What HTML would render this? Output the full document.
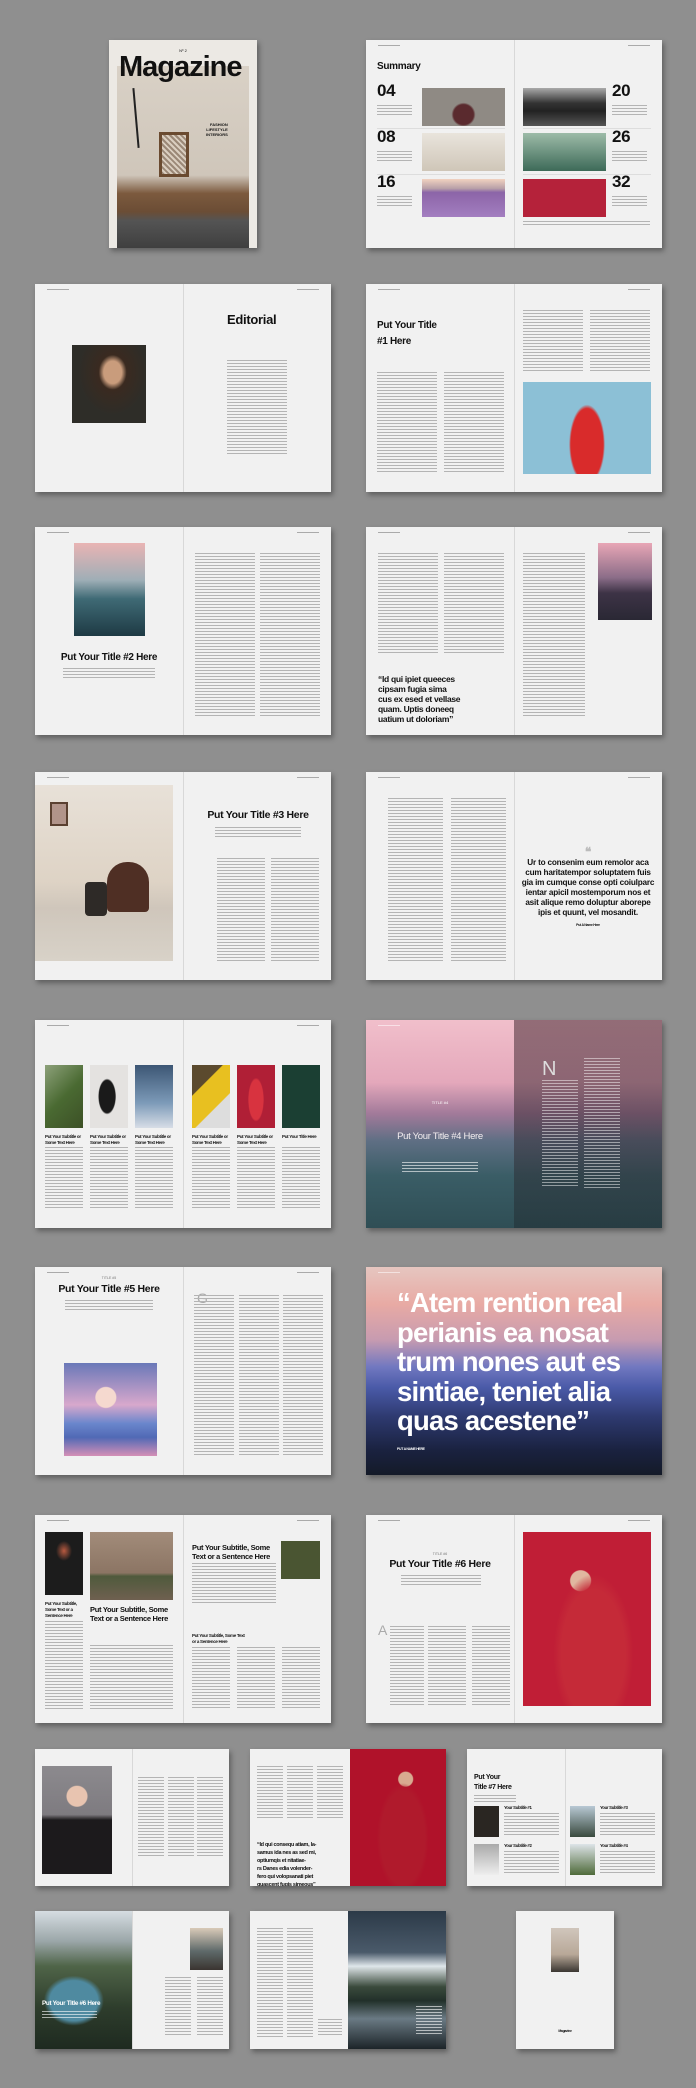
<!DOCTYPE html>
<html><head><meta charset="utf-8">
<style>
*{box-sizing:border-box}
body{margin:0;width:696px;height:2088px;background:#8f8f8f;position:relative;overflow:hidden;font-family:"Liberation Sans",sans-serif;color:#111}
.p{position:absolute;background:#f1f1f1;box-shadow:2px 3px 5px rgba(0,0,0,.35);overflow:hidden}
.p>*{position:absolute}
.fold{left:50%;top:0;bottom:0;width:1px;background:#d8d8d8}
.tx{background:repeating-linear-gradient(#b4b4b4 0 1px,transparent 1px 3px)}
.txw{background:repeating-linear-gradient(rgba(255,255,255,.6) 0 1px,transparent 1px 3px)}
.hl{top:5px;height:1px;width:22px;background:#aaa}
.b{font-weight:bold;letter-spacing:-.3px;line-height:1.1}
.big{width:296px;height:208px}
.sm{height:137px}
</style></head><body>

<!-- Row 1 -->
<div class="p" style="left:109px;top:40px;width:148px;height:208px;background:#ece9e4">
  <div style="left:8px;top:26px;width:132px;height:182px;background:linear-gradient(#d9d1c6 0,#cfc6ba 60%,#7c5a3e 70%,#6b4d35 80%,#545454 85%,#3f3f3f 100%)"></div>
  <div style="left:50px;top:92px;width:30px;height:45px;border:3px solid #6a4a30;background:repeating-linear-gradient(45deg,#9b8877 0 2px,#d9cdbf 2px 4px)"></div>
  <div style="left:26px;top:48px;width:2px;height:60px;background:#222;transform:rotate(-5deg)"></div>
  <div style="left:0;top:8px;width:148px;text-align:center;font-size:4px">Nº 2</div>
  <div class="b" style="left:10px;top:12px;font-size:29px;letter-spacing:-1px">Magazine</div>
  <div style="left:97px;top:82px;font-size:4px;font-weight:bold;text-align:right;line-height:5px">FASHION<br>LIFESTYLE<br>INTERIORS</div>
</div>

<div class="p big" style="left:366px;top:40px">
  <div class="fold"></div>
  <div class="hl" style="left:12px"></div><div class="hl" style="right:12px"></div>
  <div class="b" style="left:11px;top:21px;font-size:10px">Summary</div>
  <div class="b" style="left:11px;top:42px;font-size:17px">04</div>
  <div class="b" style="left:11px;top:88px;font-size:17px">08</div>
  <div class="b" style="left:11px;top:133px;font-size:17px">16</div>
  <div class="tx" style="left:11px;top:65px;width:35px;height:12px"></div>
  <div class="tx" style="left:11px;top:111px;width:35px;height:12px"></div>
  <div class="tx" style="left:11px;top:156px;width:35px;height:12px"></div>
  <div style="left:11px;top:88px;width:128px;height:1px;background:#ddd"></div>
  <div style="left:11px;top:134px;width:128px;height:1px;background:#ddd"></div>
  <div style="left:157px;top:88px;width:128px;height:1px;background:#ddd"></div>
  <div style="left:157px;top:134px;width:128px;height:1px;background:#ddd"></div>
  <div style="left:56px;top:48px;width:83px;height:38px;background:radial-gradient(circle at 50% 70%,#5a2a2e 0 10px,#8f8a84 12px)"></div>
  <div style="left:56px;top:93px;width:83px;height:38px;background:linear-gradient(#e9e4dc,#cfc6b8)"></div>
  <div style="left:56px;top:139px;width:83px;height:38px;background:linear-gradient(#f1d2c0 0,#b8a0a8 25%,#8c65a8 35%,#a37ec0 100%)"></div>
  <div style="left:157px;top:48px;width:83px;height:38px;background:linear-gradient(#aaa 0,#333 40%,#222 60%,#555 100%)"></div>
  <div style="left:157px;top:93px;width:83px;height:38px;background:linear-gradient(#9dbba8,#3d6a58)"></div>
  <div style="left:157px;top:139px;width:83px;height:38px;background:#b5223a"></div>
  <div class="b" style="left:246px;top:42px;font-size:17px">20</div>
  <div class="b" style="left:246px;top:88px;font-size:17px">26</div>
  <div class="b" style="left:246px;top:133px;font-size:17px">32</div>
  <div class="tx" style="left:246px;top:65px;width:35px;height:12px"></div>
  <div class="tx" style="left:246px;top:111px;width:35px;height:12px"></div>
  <div class="tx" style="left:246px;top:156px;width:35px;height:12px"></div>
  <div class="tx" style="left:157px;top:181px;width:127px;height:4px"></div>
</div>

<!-- Row 2 -->
<div class="p big" style="left:35px;top:284px">
  <div class="fold"></div>
  <div class="hl" style="left:12px"></div><div class="hl" style="right:12px"></div>
  <div style="left:37px;top:61px;width:74px;height:78px;background:radial-gradient(ellipse at 55% 35%,#c99c7c 0 9px,#3a2a20 14px,#2e2d28 60%)"></div>
  <div class="b" style="left:192px;top:29px;font-size:13px">Editorial</div>
  <div class="tx" style="left:192px;top:76px;width:60px;height:94px"></div>
</div>

<div class="p big" style="left:366px;top:284px">
  <div class="fold"></div>
  <div class="hl" style="left:12px"></div><div class="hl" style="right:12px"></div>
  <div class="b" style="left:11px;top:34px;font-size:10px;line-height:16px">Put Your Title<br>#1 Here</div>
  <div class="tx" style="left:11px;top:88px;width:60px;height:100px"></div>
  <div class="tx" style="left:78px;top:88px;width:60px;height:100px"></div>
  <div class="tx" style="left:157px;top:26px;width:60px;height:62px"></div>
  <div class="tx" style="left:224px;top:26px;width:60px;height:62px"></div>
  <div style="left:157px;top:98px;width:128px;height:92px;background:radial-gradient(ellipse 18px 40px at 50% 68%,#d92b2b 90%,transparent 100%),#8cc0d6"></div>
</div>

<!-- Row 3 -->
<div class="p big" style="left:35px;top:527px">
  <div class="fold"></div>
  <div class="hl" style="left:12px"></div><div class="hl" style="right:12px"></div>
  <div style="left:39px;top:16px;width:71px;height:93px;background:linear-gradient(#e9b4b4,#9eaeb6 40%,#3f6a75 60%,#1e3a44)"></div>
  <div class="b" style="left:0;top:125px;width:148px;text-align:center;font-size:10px">Put Your Title #2 Here</div>
  <div class="tx" style="left:28px;top:141px;width:92px;height:12px"></div>
  <div class="tx" style="left:160px;top:26px;width:60px;height:165px"></div>
  <div class="tx" style="left:225px;top:26px;width:60px;height:165px"></div>
</div>

<div class="p big" style="left:366px;top:527px">
  <div class="fold"></div>
  <div class="hl" style="left:12px"></div><div class="hl" style="right:12px"></div>
  <div class="tx" style="left:12px;top:26px;width:60px;height:100px"></div>
  <div class="tx" style="left:78px;top:26px;width:60px;height:100px"></div>
  <div class="b" style="left:12px;top:147px;font-size:8.5px;line-height:10px">“Id qui ipiet queeces<br>cipsam fugia sima<br>cus ex esed et vellase<br>quam. Uptis doneeq<br>uatium ut doloriam”</div>
  <div style="left:232px;top:16px;width:54px;height:77px;background:linear-gradient(#e8a6b6,#8b6d88 45%,#3d3346 65%,#2a2834)"></div>
  <div class="tx" style="left:157px;top:26px;width:62px;height:165px"></div>
</div>

<!-- Row 4 -->
<div class="p big" style="left:35px;top:772px">
  <div class="fold"></div>
  <div class="hl" style="left:12px"></div><div class="hl" style="right:12px"></div>
  <div style="left:0;top:13px;width:138px;height:176px;background:linear-gradient(#e8e1d8 0,#ded3c5 55%,#cfc6bb 70%,#d8d2c8 100%)"></div>
  <div style="left:72px;top:90px;width:42px;height:50px;border-radius:20px 20px 4px 4px;background:#4f2f24"></div>
  <div style="left:50px;top:110px;width:22px;height:34px;background:#2e2a27;border-radius:4px"></div>
  <div style="left:15px;top:30px;width:18px;height:24px;background:#b1948a;border:2px solid #5a4030"></div>
  <div class="b" style="left:150px;top:38px;width:146px;text-align:center;font-size:10.5px">Put Your Title #3 Here</div>
  <div class="tx" style="left:180px;top:55px;width:86px;height:10px"></div>
  <div class="tx" style="left:182px;top:86px;width:48px;height:104px"></div>
  <div class="tx" style="left:236px;top:86px;width:48px;height:104px"></div>
</div>

<div class="p big" style="left:366px;top:772px">
  <div class="fold"></div>
  <div class="hl" style="left:12px"></div><div class="hl" style="right:12px"></div>
  <div class="tx" style="left:22px;top:26px;width:55px;height:165px"></div>
  <div class="tx" style="left:85px;top:26px;width:55px;height:165px"></div>
  <div class="b" style="left:148px;top:74px;width:148px;text-align:center;font-size:12px;color:#bbb">❝</div>
  <div style="left:148px;top:86px;width:148px;text-align:center;font-size:8.2px;line-height:10px;font-weight:bold;letter-spacing:-.2px">Ur to consenim eum remolor aca<br>cum haritatempor soluptatem fuis<br>gia im cumque conse opti coiulparc<br>ientar apicil mostemporum nos et<br>asit alique remo doluptur aborepe<br>ipis et quunt, vel mosandit.</div>
  <div class="b" style="left:148px;top:152px;width:148px;text-align:center;font-size:3.5px">Put A Name Here</div>
</div>

<!-- Row 5 -->
<div class="p big" style="left:35px;top:1020px">
  <div class="fold"></div>
  <div class="hl" style="left:12px"></div><div class="hl" style="right:12px"></div>
  <div style="left:10px;top:45px;width:38px;height:63px;background:linear-gradient(135deg,#8da17a,#4a6a32 50%,#3c5026)"></div>
  <div style="left:55px;top:45px;width:38px;height:63px;background:radial-gradient(ellipse 9px 18px at 45% 50%,#1a1a1a 90%,transparent),#e4e2e0"></div>
  <div style="left:100px;top:45px;width:38px;height:63px;background:linear-gradient(#3c5674,#7c9ab8 60%,#d7dde6)"></div>
  <div style="left:157px;top:45px;width:38px;height:63px;background:linear-gradient(135deg,#5b4a2e 30%,#e8c020 31%,#e8c020 65%,#ddd 66%)"></div>
  <div style="left:202px;top:45px;width:38px;height:63px;background:radial-gradient(ellipse 8px 22px at 50% 55%,#d8333f 90%,transparent),#b01f36"></div>
  <div style="left:247px;top:45px;width:38px;height:63px;background:#1b3f33"></div>
  <div class="b" style="left:10px;top:114px;font-size:4.5px;line-height:6px">Put Your Subtitle or<br>Some Text Here</div>
  <div class="b" style="left:55px;top:114px;font-size:4.5px;line-height:6px">Put Your Subtitle or<br>Some Text Here</div>
  <div class="b" style="left:100px;top:114px;font-size:4.5px;line-height:6px">Put Your Subtitle or<br>Some Text Here</div>
  <div class="b" style="left:157px;top:114px;font-size:4.5px;line-height:6px">Put Your Subtitle or<br>Some Text Here</div>
  <div class="b" style="left:202px;top:114px;font-size:4.5px;line-height:6px">Put Your Subtitle or<br>Some Text Here</div>
  <div class="b" style="left:247px;top:114px;font-size:4.5px;line-height:6px">Put Your Title Here</div>
  <div class="tx" style="left:10px;top:127px;width:38px;height:63px"></div>
  <div class="tx" style="left:55px;top:127px;width:38px;height:63px"></div>
  <div class="tx" style="left:100px;top:127px;width:38px;height:63px"></div>
  <div class="tx" style="left:157px;top:127px;width:38px;height:63px"></div>
  <div class="tx" style="left:202px;top:127px;width:38px;height:63px"></div>
  <div class="tx" style="left:247px;top:127px;width:38px;height:63px"></div>
</div>

<div class="p big" style="left:366px;top:1020px;background:linear-gradient(#f1bfcb 0,#e4a8bb 30%,#a27a9a 45%,#5f6f84 58%,#3a5d66 75%,#2f4e55 100%)">
  <div style="left:148px;top:0;width:148px;height:208px;background:linear-gradient(rgba(70,40,50,.55),rgba(30,40,45,.45))"></div>
  <div style="left:12px;top:5px;width:22px;height:1px;background:#fff8"></div>
  <div style="left:0;top:80px;width:148px;text-align:center;font-size:4px;color:#fff">TITLE #4</div>
  <div class="b" style="left:0;top:112px;width:148px;text-align:center;font-size:9.5px;color:#f4eef0;font-weight:normal">Put Your Title #4 Here</div>
  <div class="txw" style="left:36px;top:142px;width:76px;height:12px"></div>
  <div style="left:176px;top:38px;font-size:20px;color:#ddd;font-weight:100">N</div>
  <div class="txw" style="left:176px;top:60px;width:36px;height:108px;opacity:.8"></div>
  <div class="txw" style="left:218px;top:38px;width:36px;height:130px;opacity:.8"></div>
</div>

<!-- Row 6 -->
<div class="p big" style="left:35px;top:1267px">
  <div class="fold"></div>
  <div class="hl" style="left:12px"></div><div class="hl" style="right:12px"></div>
  <div style="left:0;top:9px;width:148px;text-align:center;font-size:3.5px;color:#777">TITLE #5</div>
  <div class="b" style="left:0;top:17px;width:148px;text-align:center;font-size:10.5px">Put Your Title #5 Here</div>
  <div class="tx" style="left:30px;top:33px;width:88px;height:12px"></div>
  <div style="left:29px;top:96px;width:93px;height:93px;background:radial-gradient(circle at 45% 37%,#f5d9cf 0 10px,transparent 11px),linear-gradient(#6a78b8,#d8a8cc 45%,#6a86cc 65%,#5169b5 80%,#d58fb6 100%)"></div>
  <div style="left:162px;top:23px;font-size:14px;color:#aaa;font-weight:100">G</div>
  <div class="tx" style="left:159px;top:28px;width:40px;height:160px"></div>
  <div class="tx" style="left:204px;top:28px;width:40px;height:160px"></div>
  <div class="tx" style="left:248px;top:28px;width:40px;height:160px"></div>
</div>

<div class="p big" style="left:366px;top:1267px;background:linear-gradient(#e6c6c0 0,#e8aaa4 18%,#c79bb0 35%,#7178c0 48%,#4a5aa8 58%,#2e3a70 72%,#1a2240 88%,#141a28 100%)">
  <div style="left:12px;top:5px;width:22px;height:1px;background:#fff8"></div>
  <div class="b" style="left:31px;top:21px;font-size:27.5px;line-height:29.5px;color:#fff;letter-spacing:-.8px">“Atem rention real<br>perianis ea nosat<br>trum nones aut es<br>sintiae, teniet alia<br>quas acestene”</div>
  <div class="b" style="left:31px;top:181px;font-size:3.5px;color:#fff">PUT A NAME HERE</div>
</div>

<!-- Row 7 -->
<div class="p big" style="left:35px;top:1515px">
  <div class="fold"></div>
  <div class="hl" style="left:12px"></div><div class="hl" style="right:12px"></div>
  <div style="left:10px;top:17px;width:38px;height:63px;background:radial-gradient(ellipse 8px 10px at 50% 30%,#b85a40,transparent),#1c1c1c"></div>
  <div style="left:55px;top:17px;width:83px;height:68px;background:linear-gradient(#a28c7a 0,#8c7564 60%,#4f5a3c 65%,#6f6050 100%)"></div>
  <div class="b" style="left:10px;top:86px;font-size:4.5px;line-height:6px">Put Your Subtitle,<br>Some Text or a<br>Sentence Here</div>
  <div class="tx" style="left:10px;top:106px;width:38px;height:88px"></div>
  <div class="b" style="left:55px;top:90px;font-size:7.5px;line-height:9px">Put Your Subtitle, Some<br>Text or a Sentence Here</div>
  <div class="tx" style="left:55px;top:130px;width:83px;height:64px"></div>
  <div class="b" style="left:157px;top:28px;font-size:7.5px;line-height:9px">Put Your Subtitle, Some<br>Text or a Sentence Here</div>
  <div style="left:246px;top:26px;width:39px;height:38px;background:#4a5532"></div>
  <div class="tx" style="left:157px;top:48px;width:84px;height:40px"></div>
  <div class="b" style="left:157px;top:118px;font-size:4.5px;line-height:6px">Put Your Subtitle, Some Text<br>or a Sentence Here</div>
  <div class="tx" style="left:157px;top:132px;width:38px;height:62px"></div>
  <div class="tx" style="left:202px;top:132px;width:38px;height:62px"></div>
  <div class="tx" style="left:247px;top:132px;width:38px;height:62px"></div>
</div>

<div class="p big" style="left:366px;top:1515px">
  <div class="fold"></div>
  <div class="hl" style="left:12px"></div><div class="hl" style="right:12px"></div>
  <div style="left:0;top:37px;width:148px;text-align:center;font-size:3.5px;color:#777">TITLE #6</div>
  <div class="b" style="left:0;top:44px;width:148px;text-align:center;font-size:10.5px">Put Your Title #6 Here</div>
  <div class="tx" style="left:35px;top:60px;width:80px;height:12px"></div>
  <div style="left:12px;top:107px;font-size:14px;color:#aaa;font-weight:100">A</div>
  <div class="tx" style="left:24px;top:111px;width:34px;height:80px"></div>
  <div class="tx" style="left:62px;top:111px;width:38px;height:80px"></div>
  <div class="tx" style="left:106px;top:111px;width:38px;height:80px"></div>
  <div style="left:157px;top:17px;width:128px;height:174px;background:radial-gradient(ellipse 40px 80px at 55% 70%,#c52a38 80%,transparent),radial-gradient(circle at 45% 28%,#e0b8a0 0 10px,transparent 11px),#c01e36"></div>
</div>

<!-- Row 8 -->
<div class="p sm" style="left:35px;top:1749px;width:194px">
  <div class="fold" style="left:50%"></div>
  <div style="left:7px;top:17px;width:70px;height:108px;background:radial-gradient(circle at 50% 28%,#e8c4b0 0 10px,transparent 11px),linear-gradient(#8c8a8e 0,#7e7b80 45%,#1c1a1c 50%)"></div>
  <div class="tx" style="left:103px;top:28px;width:26px;height:80px"></div>
  <div class="tx" style="left:133px;top:28px;width:26px;height:80px"></div>
  <div class="tx" style="left:162px;top:28px;width:26px;height:80px"></div>
</div>

<div class="p sm" style="left:250px;top:1749px;width:196px">
  <div class="tx" style="left:7px;top:17px;width:26px;height:52px"></div>
  <div class="tx" style="left:37px;top:17px;width:26px;height:52px"></div>
  <div class="tx" style="left:67px;top:17px;width:26px;height:52px"></div>
  <div class="b" style="left:7px;top:92px;font-size:5.5px;line-height:8px">“Id qui consequ atiam, la-<br>samus ida nes as sed mi,<br>optiumqis et nitatiae-<br>rs Danes edia volender-<br>fero qui volopsanati piet<br>quascent fugis simeous”</div>
  <div style="left:100px;top:0;width:96px;height:137px;background:radial-gradient(ellipse 26px 55px at 55% 65%,#b01a2c 85%,transparent),radial-gradient(circle at 58% 22%,#d8aa90 0 7px,transparent 8px),#b0122a"></div>
</div>

<div class="p sm" style="left:467px;top:1749px;width:195px">
  <div class="fold"></div>
  <div class="b" style="left:7px;top:24px;font-size:7px;line-height:10px">Put Your<br>Title #7 Here</div>
  <div class="tx" style="left:7px;top:46px;width:42px;height:8px"></div>
  <div style="left:7px;top:57px;width:25px;height:31px;background:#2a2622"></div>
  <div style="left:7px;top:95px;width:25px;height:31px;background:linear-gradient(#aaa,#eee)"></div>
  <div style="left:103px;top:57px;width:25px;height:31px;background:linear-gradient(#b8c8d4,#394a3e)"></div>
  <div style="left:103px;top:95px;width:25px;height:31px;background:linear-gradient(#dde4e8,#4f6a3a)"></div>
  <div class="b" style="left:37px;top:57px;font-size:4.3px">Your Subtitle #1</div>
  <div class="b" style="left:37px;top:95px;font-size:4.3px">Your Subtitle #2</div>
  <div class="b" style="left:133px;top:57px;font-size:4.3px">Your Subtitle #3</div>
  <div class="b" style="left:133px;top:95px;font-size:4.3px">Your Subtitle #4</div>
  <div class="tx" style="left:37px;top:64px;width:55px;height:24px"></div>
  <div class="tx" style="left:37px;top:102px;width:55px;height:24px"></div>
  <div class="tx" style="left:133px;top:64px;width:55px;height:24px"></div>
  <div class="tx" style="left:133px;top:102px;width:55px;height:24px"></div>
</div>

<!-- Row 9 -->
<div class="p sm" style="left:35px;top:1911px;width:194px;height:138px">
  <div class="fold"></div>
  <div style="left:0;top:0;width:97px;height:138px;background:radial-gradient(ellipse 30px 25px at 40% 65%,#4f8aa0 80%,transparent),linear-gradient(#d6dde2 0,#9aa6a8 22%,#4f6448 40%,#2e3d2c 70%,#1e2a20 100%)"></div>
  <div class="b" style="left:7px;top:90px;font-size:6.3px;color:#fff">Put Your Title #6 Here</div>
  <div class="txw" style="left:7px;top:100px;width:55px;height:9px"></div>
  <div style="left:155px;top:17px;width:33px;height:42px;background:linear-gradient(#d9cab8,#5f6a6a 55%,#3a3430)"></div>
  <div class="tx" style="left:130px;top:66px;width:26px;height:60px"></div>
  <div class="tx" style="left:162px;top:66px;width:26px;height:60px"></div>
</div>

<div class="p sm" style="left:250px;top:1911px;width:196px;height:138px">
  <div class="tx" style="left:7px;top:17px;width:26px;height:110px"></div>
  <div class="tx" style="left:37px;top:17px;width:26px;height:110px"></div>
  <div class="tx" style="left:68px;top:108px;width:24px;height:18px"></div>
  <div style="left:98px;top:0;width:98px;height:138px;background:linear-gradient(#2c3a48 0,#4a5a6a 30%,#dfe6ea 40%,#3a4a3c 55%,#22302a 65%,#6a7a84 78%,#1c2428 100%)"></div>
  <div class="txw" style="left:166px;top:95px;width:26px;height:28px"></div>
</div>

<div class="p" style="left:516px;top:1911px;width:98px;height:138px">
  <div style="left:35px;top:17px;width:28px;height:44px;background:linear-gradient(#d0c6bc,#b8a898 60%,#3a3632)"></div>
  <div class="b" style="left:0;top:119px;width:98px;text-align:center;font-size:3.5px">Magazine</div>
</div>

</body></html>
